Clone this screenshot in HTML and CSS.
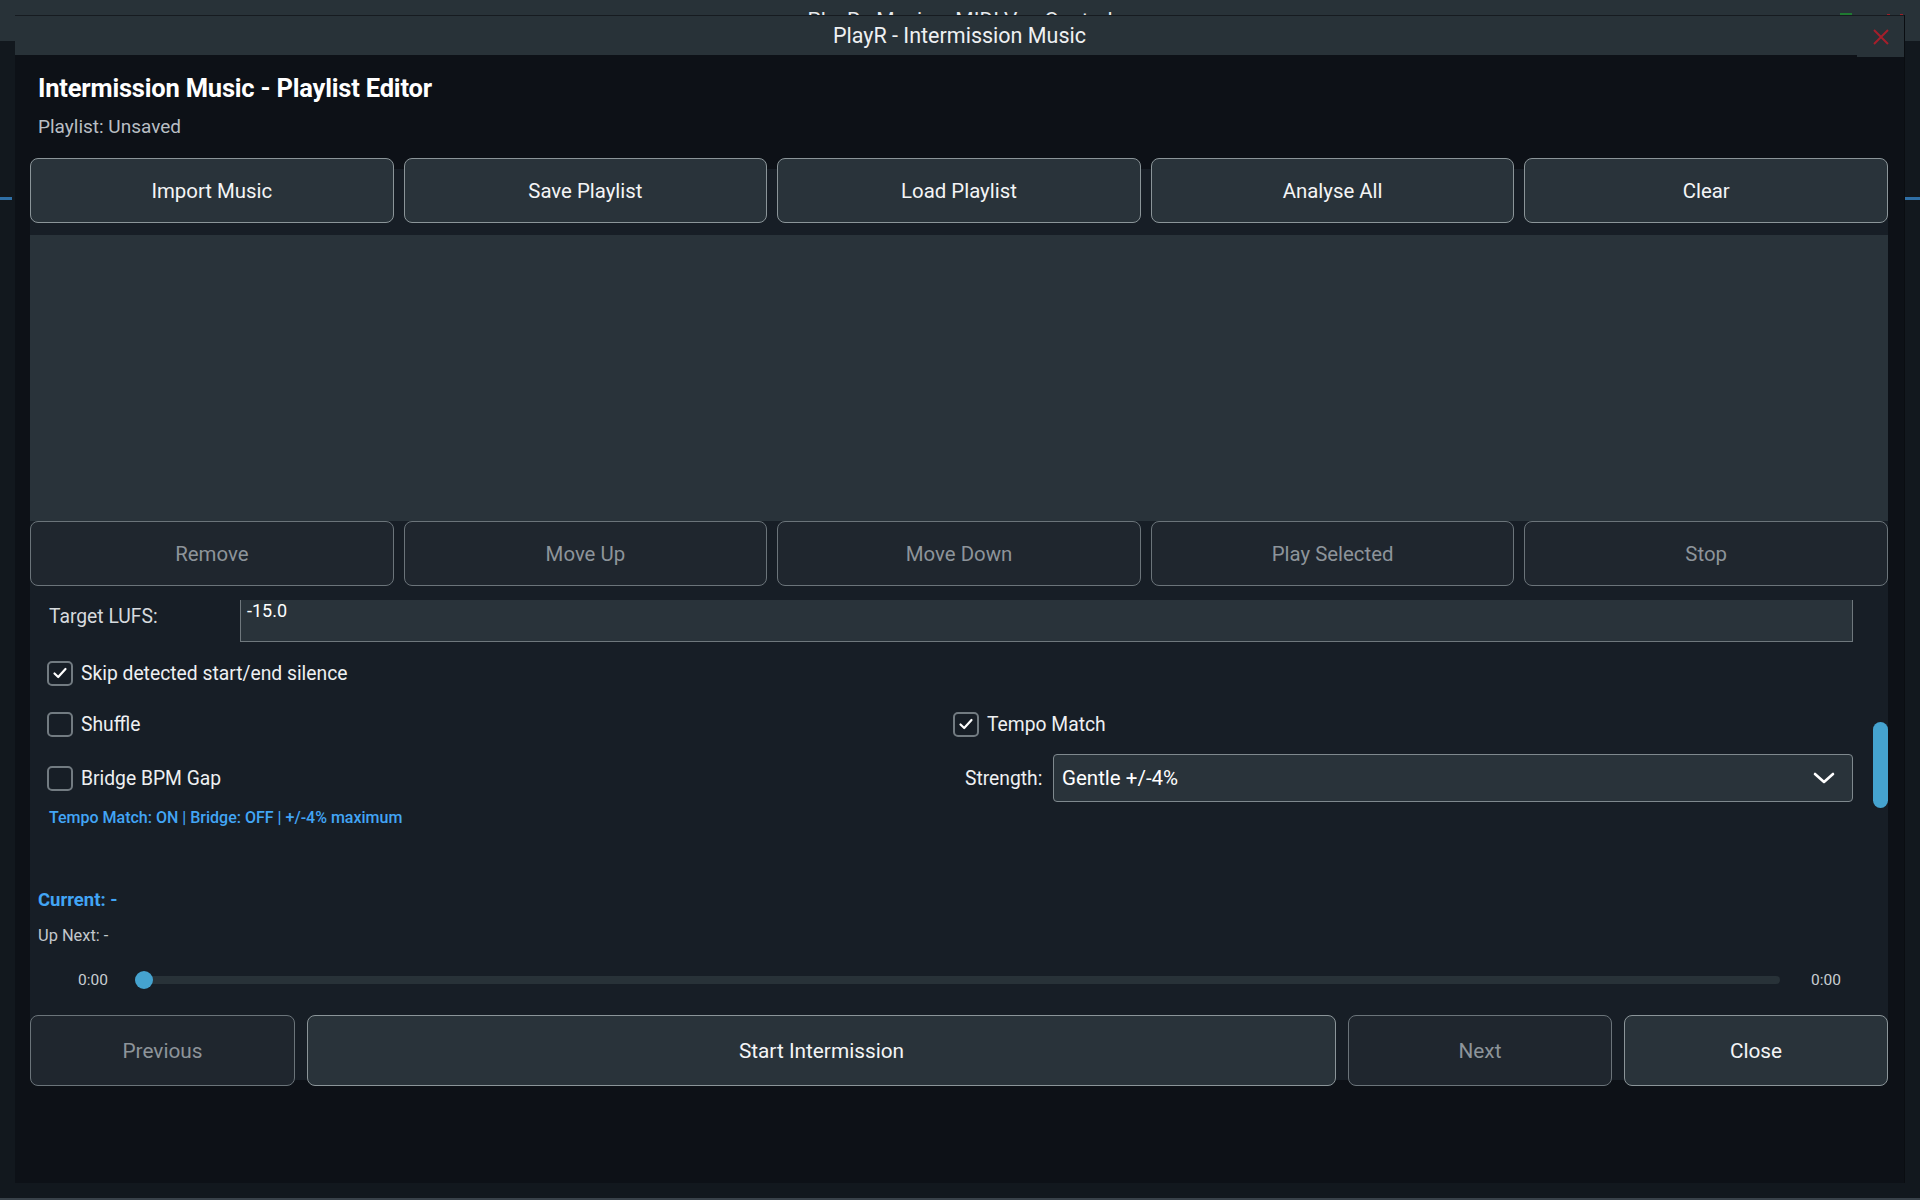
FILE: index.html
```html
<!DOCTYPE html>
<html lang="en">
<head>
<meta charset="utf-8">
<title>PlayR - Intermission Music</title>
<link rel="stylesheet" href="styles.css">
</head>
<body>
<div class="desk">
  <div class="bg-title"><div class="bg-title-clip"><span class="bg-title-text">PlayR - Music + MIDI Vox Control</span></div></div>
  <span class="bg-green"></span>
  <span class="bg-dot bg-dot-1"></span>
  <span class="bg-dot bg-dot-2"></span>
  <span class="bg-tab bg-tab-l"></span>
  <span class="bg-tab bg-tab-r"></span>

  <div class="dialog">
    <div class="titlebar">
      <span class="title">PlayR - Intermission Music</span>
      <span class="close">
        <svg width="16" height="16" viewBox="0 0 16 16"><path d="M1 1 L15 15 M15 1 L1 15" stroke="#a51f2b" stroke-width="2" fill="none"/></svg>
      </span>
    </div>

    <div class="body">
      <h1 class="heading">Intermission Music - Playlist Editor</h1>
      <div class="sub">Playlist: Unsaved</div>

      <div class="panel">
        <div class="btnrow">
          <button class="btn">Import Music</button>
          <button class="btn">Save Playlist</button>
          <button class="btn">Load Playlist</button>
          <button class="btn">Analyse All</button>
          <button class="btn">Clear</button>
        </div>

        <div class="list"></div>

        <div class="btnrow">
          <button class="btn btn-off">Remove</button>
          <button class="btn btn-off">Move Up</button>
          <button class="btn btn-off">Move Down</button>
          <button class="btn btn-off">Play Selected</button>
          <button class="btn btn-off">Stop</button>
        </div>

        <div class="scroll">
          <div class="field-row">
            <span class="label lufs-label">Target LUFS:</span>
            <div class="input">-15.0</div>
          </div>

          <label class="check check-skip">
            <span class="box on"><svg width="16" height="14" viewBox="0 0 16 14"><path d="M2.5 7.5 L6.2 11 L13.5 3" stroke="#ffffff" stroke-width="2.2" fill="none" stroke-linecap="round" stroke-linejoin="round"/></svg></span>
            <span class="check-text">Skip detected start/end silence</span>
          </label>

          <div class="grid2">
            <div class="cell">
              <label class="check">
                <span class="box"></span>
                <span class="check-text">Shuffle</span>
              </label>
            </div>
            <div class="cell">
              <label class="check">
                <span class="box on"><svg width="16" height="14" viewBox="0 0 16 14"><path d="M2.5 7.5 L6.2 11 L13.5 3" stroke="#ffffff" stroke-width="2.2" fill="none" stroke-linecap="round" stroke-linejoin="round"/></svg></span>
                <span class="check-text">Tempo Match</span>
              </label>
            </div>
            <div class="cell cell-low">
              <label class="check">
                <span class="box"></span>
                <span class="check-text">Bridge BPM Gap</span>
              </label>
            </div>
            <div class="cell strength">
              <span class="label strength-label">Strength:</span>
              <div class="combo">
                <span>Gentle +/-4%</span>
                <svg width="22" height="12" viewBox="0 0 22 12"><path d="M2 2 L11 10 L20 2" stroke="#ffffff" stroke-width="2.6" fill="none" stroke-linecap="round" stroke-linejoin="round"/></svg>
              </div>
            </div>
          </div>

          <div class="status">Tempo Match: ON | Bridge: OFF | +/-4% maximum</div>

          <span class="thumb"></span>
        </div>

        <div class="now">
          <div class="current">Current: -</div>
          <div class="upnext">Up Next: -</div>
          <div class="slider-row">
            <span class="time time-l">0:00</span>
            <div class="track"><span class="handle"></span></div>
            <span class="time time-r">0:00</span>
          </div>
        </div>

        <div class="btnrow btnrow-bottom">
          <button class="btn btn-big btn-off">Previous</button>
          <button class="btn btn-big">Start Intermission</button>
          <button class="btn btn-big btn-off">Next</button>
          <button class="btn btn-big">Close</button>
        </div>
      </div>
    </div>
  </div>
</div>
</body>
</html>
```

FILE: styles.css
```css
* { box-sizing: border-box; }

html, body {
  margin: 0;
  padding: 0;
  background: #12181e;
}

body {
  font-family: Roboto, "Noto Sans", "Liberation Sans", sans-serif;
  color: #eef0f2;
}

.desk {
  position: relative;
  width: 1920px;
  height: 1200px;
  overflow: hidden;
  background: #12181e;
  border-bottom: 2px solid #39424a;
}

.bg-title {
  height: 41px;
  background: #283238;
}

.bg-title-clip {
  height: 15px;
  overflow: hidden;
  text-align: center;
}

.bg-title-text {
  display: inline-block;
  color: #e6e9ec;
  font-size: 21px;
  line-height: 40px;
}

.bg-green {
  position: absolute;
  left: 1840px;
  top: 13px;
  width: 12px;
  height: 3px;
  background: #1f7a31;
}

.bg-dot {
  position: absolute;
  top: 14px;
  width: 3px;
  height: 2px;
  background: #9a2129;
}
.bg-dot-1 { left: 1887px; }
.bg-dot-2 { left: 1900px; }

.bg-tab {
  position: absolute;
  top: 197px;
  height: 3px;
  background: #2f6fa6;
}
.bg-tab-l { left: 0; width: 12px; }
.bg-tab-r { left: 1905px; width: 15px; }

.dialog {
  position: absolute;
  left: 15px;
  top: 15px;
  width: 1890px;
  height: 1168px;
  background: #0d1117;
  border-right: 1px solid #0a0d11;
  display: flex;
  flex-direction: column;
}

.titlebar {
  height: 40px;
  flex: none;
  background: #283238;
  border-top: 1px solid #161b20;
  display: flex;
  align-items: center;
  justify-content: center;
  position: relative;
}

.title {
  font-size: 21.5px;
  color: #eef0f2;
}

.close {
  position: absolute;
  right: 0;
  top: 0;
  width: 47px;
  height: 41px;
  background: #283238;
  display: flex;
  align-items: center;
  justify-content: center;
}

.body {
  padding: 0 16px 0 15px;
}

.heading {
  margin: 18px 0 0 8px;
  font-size: 25.5px;
  line-height: 30px;
  font-weight: 700;
  color: #ffffff;
  letter-spacing: -0.2px;
}

.sub {
  margin: 13px 0 0 8px;
  font-size: 19px;
  line-height: 22px;
  color: #b9bfc4;
}

.panel {
  margin-top: 20px;
  display: flex;
  flex-direction: column;
  background: linear-gradient(to bottom,
    transparent 11px,
    #171e26 11px,
    #171e26 calc(100% - 6px),
    transparent calc(100% - 6px));
}

.btnrow {
  display: grid;
  grid-template-columns: repeat(5, 1fr);
  gap: 10px;
  height: 65px;
}

.btn {
  font-family: inherit;
  font-size: 20.4px;
  color: #f4f5f6;
  background: #29333a;
  border: 1.5px solid #8b9599;
  border-radius: 8px;
  padding: 0;
  margin: 0;
}

.btn-off {
  background: #1f262e;
  border-color: #6b747a;
  color: #8d949a;
}

.list {
  margin-top: 12px;
  height: 286px;
  background: #29333a;
}

.scroll {
  position: relative;
  margin-top: 14px;
  padding: 0 35px 0 17px;
}

.field-row {
  display: flex;
  height: 42px;
}

.label {
  font-size: 19.3px;
  color: #d6dade;
}

.lufs-label {
  width: 193px;
  padding-left: 2px;
  line-height: 34px;
}

.input {
  flex: 1;
  background: #29333a;
  border: 1.5px solid #6f787d;
  border-top: none;
  font-size: 18px;
  color: #ffffff;
  padding: 1px 0 0 6px;
  line-height: 20px;
}

.check {
  display: flex;
  align-items: center;
  gap: 8px;
  height: 26px;
}

.check-skip {
  margin-top: 18px;
}

.box {
  width: 26px;
  height: 25px;
  border: 2px solid #727b81;
  border-radius: 5px;
  display: flex;
  align-items: center;
  justify-content: center;
  flex: none;
}

.check-text {
  font-size: 19.3px;
  color: #eef0f2;
}

.grid2 {
  display: grid;
  grid-template-columns: 1fr 1fr;
  column-gap: 6px;
  margin-top: 25px;
}

.cell {
  height: 26px;
  display: flex;
  align-items: center;
}

.cell-low,
.strength {
  margin-top: 28px;
}

.strength {
  gap: 12px;
  padding-left: 12px;
}

.strength-label {
  width: 76px;
  flex: none;
  color: #eef0f2;
}

.combo {
  flex: 1;
  height: 48px;
  background: #29333a;
  border: 1.5px solid #7f898e;
  border-radius: 4px;
  display: flex;
  align-items: center;
  justify-content: space-between;
  padding: 0 17px 0 8px;
  font-size: 20.5px;
  color: #ffffff;
}

.status {
  margin-top: 17px;
  margin-left: 2px;
  font-size: 16px;
  line-height: 20px;
  font-weight: 500;
  color: #42a5f5;
}

.thumb {
  position: absolute;
  right: 0;
  top: 122px;
  width: 15px;
  height: 86px;
  border-radius: 8px;
  background: #45a3cf;
}

.now {
  padding: 0 0 0 8px;
}

.current {
  margin-top: 60px;
  font-size: 18.5px;
  line-height: 24px;
  font-weight: 700;
  color: #42a5f5;
}

.upnext {
  margin-top: 14px;
  font-size: 16.4px;
  line-height: 20px;
  color: #c3c8cc;
}

.slider-row {
  display: flex;
  align-items: center;
  height: 22px;
  margin-top: 23px;
  padding: 0 17px 0 10px;
}

.time {
  width: 60px;
  font-size: 15.5px;
  color: #c9ced2;
  flex: none;
}

.time-l {
  text-align: right;
  margin-right: 27px;
}

.time-r {
  margin-left: 31px;
}

.track {
  flex: 1;
  height: 8px;
  border-radius: 4px;
  background: #283238;
  position: relative;
}

.handle {
  position: absolute;
  left: 0;
  top: -5px;
  width: 18px;
  height: 18px;
  border-radius: 50%;
  background: #45a3cf;
}

.btnrow-bottom {
  grid-template-columns: 265px 1fr 264px 264px;
  gap: 12px;
  height: 71px;
  margin-top: 24px;
}

.btn-big {
  font-size: 20.8px;
}
```
